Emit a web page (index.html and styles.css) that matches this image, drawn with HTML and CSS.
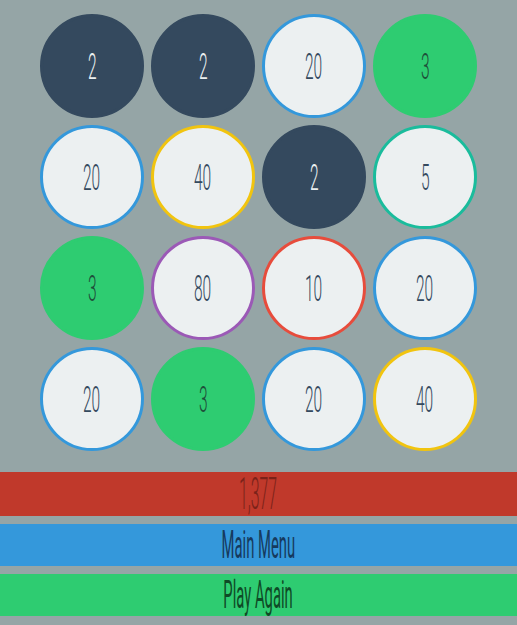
FILE: index.html
```html
<!DOCTYPE html>
<html lang="en">
<head>
  <meta charset="UTF-8" />
  <title>Merge Dots</title>
  <link rel="stylesheet" href="styles.css">
</head>
<body>
  <div class="board">
    <div class="dot dark"><span>2</span></div>
    <div class="dot dark"><span>2</span></div>
    <div class="dot ring-blue"><span>20</span></div>
    <div class="dot green"><span>3</span></div>

    <div class="dot ring-blue"><span>20</span></div>
    <div class="dot ring-yellow"><span>40</span></div>
    <div class="dot dark"><span>2</span></div>
    <div class="dot ring-teal"><span>5</span></div>

    <div class="dot green"><span>3</span></div>
    <div class="dot ring-purple"><span>80</span></div>
    <div class="dot ring-red"><span>10</span></div>
    <div class="dot ring-blue"><span>20</span></div>

    <div class="dot ring-blue"><span>20</span></div>
    <div class="dot green"><span>3</span></div>
    <div class="dot ring-blue"><span>20</span></div>
    <div class="dot ring-yellow"><span>40</span></div>
  </div>

  <div class="bars">
    <div class="bar score"><span>1,377</span></div>
    <button class="bar menu"><span>Main Menu</span></button>
    <button class="bar again"><span>Play Again</span></button>
  </div>
</body>
</html>
```

FILE: styles.css
```css
* {
  box-sizing: border-box;
}

body {
  margin: 0;
  background-color: #95a5a6;
  font-family: Roboto, 'Liberation Sans', sans-serif;
  height: 625px;
  overflow: hidden;
}

.board {
  display: grid;
  grid-template-columns: repeat(4, 104px);
  grid-auto-rows: 104px;
  gap: 7px;
  padding: 14px 40px 0;
}

.dot {
  border-radius: 50%;
  display: flex;
  justify-content: center;
  align-items: center;
  background-color: #ecf0f1;
  color: #34495e;
  border: 3px solid transparent;
}

/* tall, narrow numerals */
.dot span {
  display: inline-block;
  font-size: 37px;
  font-weight: 300;
  transform: scaleX(0.42);
  line-height: 1;
}

.dark {
  background-color: #34495e;
  border-color: #34495e;
  color: #ecf0f1;
}

.green {
  background-color: #2ecc71;
  border-color: #2ecc71;
  color: #1f4e3a;
}

.ring-blue { border-color: #3498db; }
.ring-yellow { border-color: #f1c40f; }
.ring-teal { border-color: #1abc9c; }
.ring-purple { border-color: #9b59b6; }
.ring-red { border-color: #e74c3c; }

.bars {
  display: flex;
  flex-direction: column;
  gap: 8px;
  margin-top: 21px;
}

.bar {
  display: flex;
  justify-content: center;
  align-items: center;
  width: 100%;
  height: 42px;
  border: none;
  margin: 0;
  padding: 0;
  font-family: inherit;
  cursor: pointer;
}

.bar span {
  display: inline-block;
  font-size: 38px;
  font-weight: 400;
  transform: scaleX(0.39);
  line-height: 1;
}

.score {
  height: 44px;
  background-color: #c0392b;
  color: #7a2219;
  cursor: default;
}

.score span {
  font-size: 44px;
  font-weight: 300;
  transform: scaleX(0.36);
}

.menu {
  background-color: #3498db;
  color: #163a5e;
}

.again {
  background-color: #2ecc71;
  color: #0e4a26;
}
```
